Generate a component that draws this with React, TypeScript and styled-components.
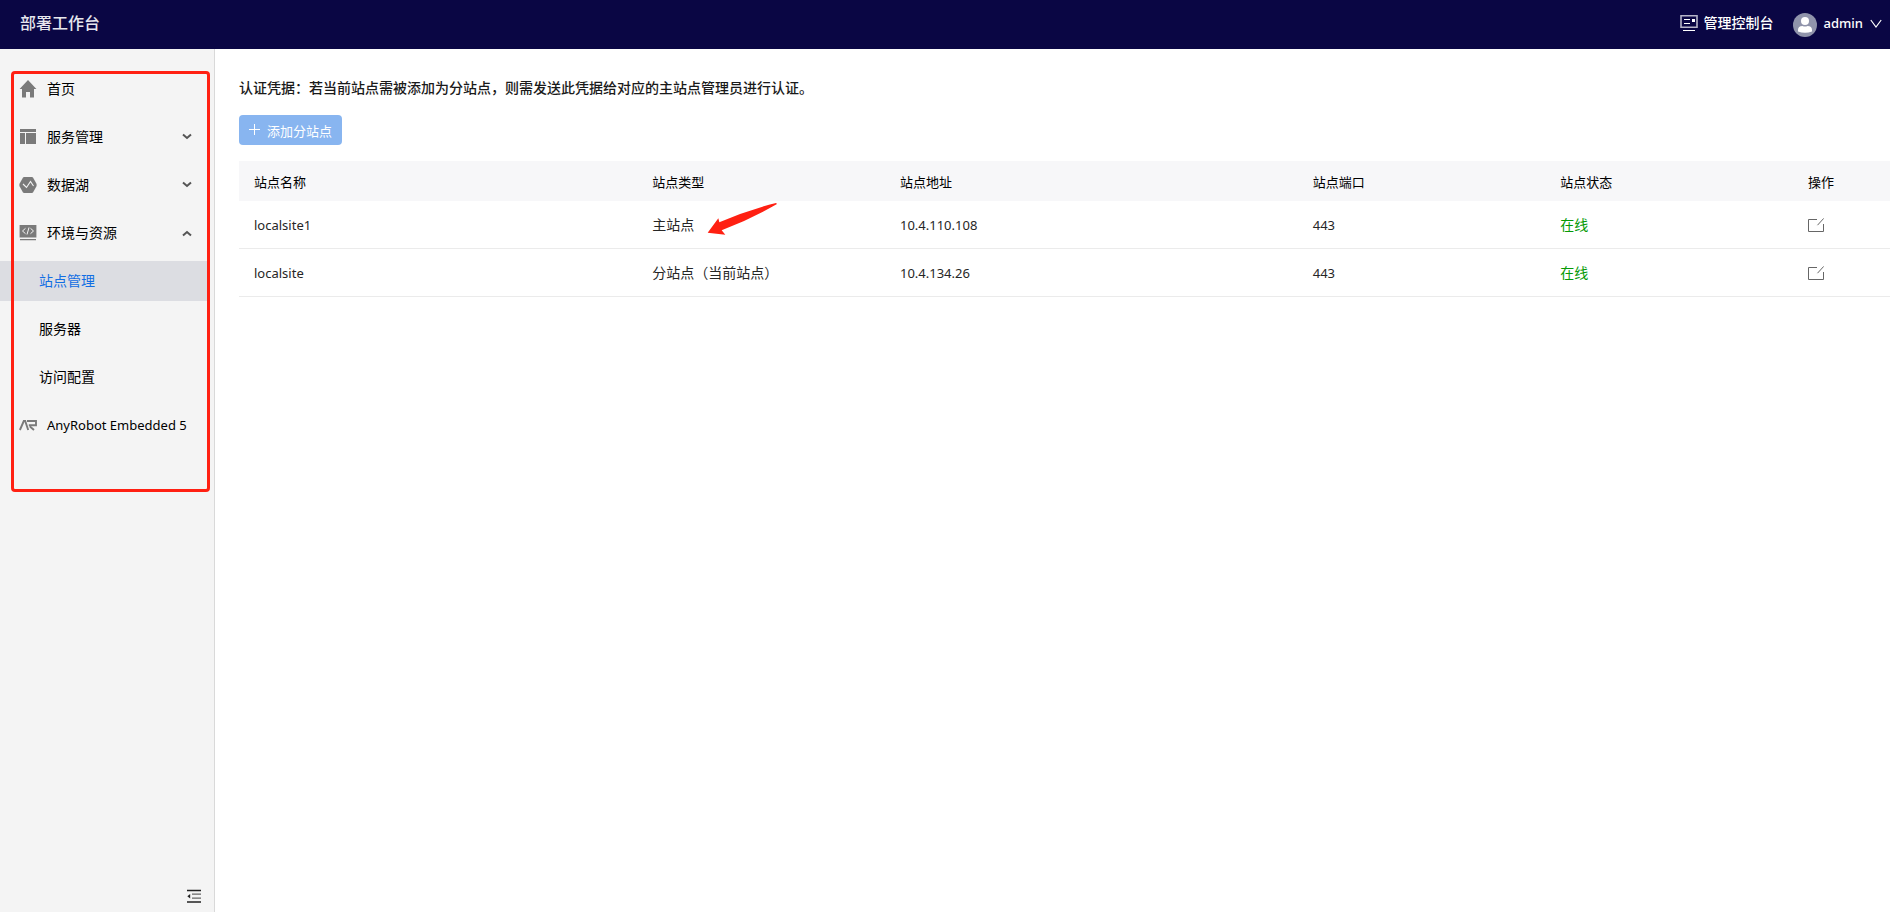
import React, { useState } from "react";
import styled, { createGlobalStyle } from "styled-components";

const GlobalStyle = createGlobalStyle`
  *, *::before, *::after { box-sizing: border-box; }
  body {
    margin: 0;
    background: #fff;
    color: #000;
    font-family: "Noto Sans", "Noto Sans CJK SC", sans-serif;
    font-size: 14px;
    line-height: 20px;
  }
  button { font: inherit; color: inherit; border: 0; padding: 0; background: none; cursor: pointer; }
  a { color: inherit; text-decoration: none; }
  svg { display: block; flex: none; }
`;

const Page = styled.div`
  display: flex;
  flex-direction: column;
  min-height: 100vh;
`;

const TopBar = styled.header`
  display: flex;
  align-items: center;
  justify-content: space-between;
  height: 49px;
  padding: 0 8px 0 20px;
  background: #0a0644;
  color: #fff;
`;

const Title = styled.h1`
  margin: 0;
  padding-bottom: 4px;
  font-size: 16px;
  line-height: 24px;
  font-weight: 500;
  color: #e6e6ee;
`;

const TopActions = styled.div`
  display: flex;
  align-items: center;
  gap: 19px;
`;

const ConsoleLink = styled.a`
  display: flex;
  align-items: center;
  gap: 6px;
  padding-bottom: 4px;
  font-weight: 500;
`;

const UserButton = styled.button`
  display: flex;
  align-items: center;
  gap: 7px;
  font-weight: 500;
`;

const UserName = styled.span`
  padding-bottom: 4px;
  font-size: 13px;
`;

const Body = styled.div`
  display: flex;
  flex: 1;
`;

const Sidebar = styled.aside`
  position: relative;
  display: flex;
  flex-direction: column;
  justify-content: space-between;
  width: 215px;
  flex: none;
  padding: 20px 7px 8px 0;
  background: #f4f4f4;
  border-right: 1px solid #d9d9d9;
`;

const NavList = styled.ul`
  display: flex;
  flex-direction: column;
  gap: 8px;
  margin: 0;
  padding: 0;
  list-style: none;
`;

const NavItem = styled.button<{ $sub?: boolean; $active?: boolean }>`
  display: flex;
  align-items: center;
  gap: 10px;
  width: 100%;
  height: 40px;
  padding: 0 15px 0 ${(p) => (p.$sub ? 39 : 19)}px;
  white-space: nowrap;
  text-align: left;
  background: ${(p) => (p.$active ? "#dcdde2" : "transparent")};
  color: ${(p) => (p.$active ? "#126ee3" : "#000")};
`;

const NavLabel = styled.span<{ $latin?: boolean }>`
  flex: 1;
  font-size: ${(p) => (p.$latin ? 13 : 14)}px;
`;

const CollapseButton = styled.button`
  align-self: flex-end;
  margin-right: 5px;
`;

const Highlight = styled.div`
  position: absolute;
  top: 22px;
  left: 11px;
  width: 199px;
  height: 421px;
  border: 3px solid #ff2012;
  border-radius: 4px;
  pointer-events: none;
`;

const Main = styled.main`
  flex: 1;
  min-width: 0;
  padding: 29px 0 24px 24px;
`;

const Notice = styled.p`
  margin: 0 0 17px;
  font-weight: 500;
  color: #1a1a1a;
`;

const AddButton = styled.button`
  display: flex;
  align-items: center;
  gap: 7px;
  height: 30px;
  margin-bottom: 16px;
  padding: 2px 10px 0;
  border-radius: 4px;
  background: #88b5f0;
  color: #fff;
  font-size: 13px;
`;

const Table = styled.table`
  width: 100%;
  table-layout: fixed;
  border-collapse: separate;
  border-spacing: 0;
`;

const HeadCell = styled.th`
  height: 40px;
  padding: 2px 15px 0;
  background: #f7f7f9;
  font-size: 13px;
  font-weight: 400;
  text-align: left;
`;

const Cell = styled.td<{ $online?: boolean; $latin?: boolean }>`
  position: relative;
  height: 48px;
  padding: 0 15px;
  border-bottom: 1px solid #ebebeb;
  font-size: ${(p) => (p.$latin ? 13 : 14)}px;
  color: ${(p) => (p.$online ? "#069a06" : "#262626")};
`;

const EditButton = styled.button`
  display: block;
`;

const Col = styled.col<{ $width?: string }>`
  width: ${(p) => p.$width ?? "auto"};
`;

const Arrow = styled.svg`
  position: absolute;
  top: 1px;
  left: 70px;
  z-index: 1;
`;

const HomeIcon = () => (
  <svg width="18" height="18" viewBox="0 0 18 18" fill="#7a7a7a">
    <path d="M9 0 .6 9H3v8.5h4v-5.4h4v5.4h4V9h2.4z" />
  </svg>
);

const ServiceIcon = () => (
  <svg width="18" height="18" viewBox="0 0 18 18" fill="#7a7a7a">
    <path d="M1 1h16v3H1zM1 5h5v11H1zM7 5h10v11H7z" />
  </svg>
);

const LakeIcon = () => (
  <svg width="18" height="18" viewBox="0 0 18 18">
    <path d="M5 1h8l1 .6 3.6 6.4v2L14 16.400l-1 .6H5l-1-.6L.4 10V8L4 1.600z" fill="#7a7a7a" />
    <path d="M4 8 7.500 11.500l4-6L14.500 10" fill="none" stroke="#f4f4f4" strokeWidth="1.100" />
  </svg>
);

const EnvIcon = () => (
  <svg width="18" height="18" viewBox="0 0 18 18">
    <path d="M.6 1h16.800v12.500H.6zM1 15h16v1.200H1z" fill="#7a7a7a" />
    <path d="M6.500 4.300 3.500 7l3 2.700M11.500 4.300l3 2.700-3 2.700M10 3.500 8 10.500" fill="none" stroke="#f4f4f4" />
  </svg>
);

const RobotIcon = () => (
  <svg width="18" height="18" viewBox="0 0 18 18" fill="none" stroke="#7a7a7a" strokeWidth="1.900">
    <path d="M.9 14 4.800 5h1.400l3 9M8 5h9v4.300H9.800M11.500 9.300V11l3.500 3" />
  </svg>
);

const Chevron = ({ up = false }: { up?: boolean }) => (
  <svg width="10" height="10" viewBox="0 0 10 10" fill="none" stroke="#555" strokeWidth="2">
    <path d={up ? "M1 7.500 5 4l4 3.500" : "M1 2.500 5 6l4-3.500"} />
  </svg>
);

const ConsoleIcon = () => (
  <svg width="18" height="18" viewBox="0 0 18 18" fill="none">
    <path d="M1 1.700h16v11.600H1z" stroke="#b5b4c8" strokeWidth="1.600" />
    <path d="M4 5.500h6M4 9.500h6M3 16.500h12" stroke="#fff" />
    <path d="M12 5h3v3h-3z" fill="#fff" />
  </svg>
);

const Avatar = () => (
  <svg width="24" height="24" viewBox="0 0 24 24" fill="#fff">
    <circle cx="12" cy="12" r="12" fill="#9094ab" />
    <circle cx="12" cy="8" r="4" />
    <path d="M5 17q0-4 4.500-4 2.500 1.200 5 0Q19 13 19 17v1.500q-7 2.600-14 0z" />
  </svg>
);

const UserChevron = () => (
  <svg width="12" height="14" viewBox="0 0 12 14" fill="none" stroke="#fff" strokeWidth="1.200">
    <path d="M.8 2 6 9l5.200-7" />
  </svg>
);

const CollapseIcon = () => (
  <svg width="16" height="16" viewBox="0 0 16 16" fill="none">
    <path d="M1 2.500h14M1 14h14" stroke="#222" strokeWidth="1.300" />
    <path d="M6 6.200h9M6 10.200h9" stroke="#666" strokeWidth="1.300" />
    <path d="M4.200 6v4.500L1.300 8.200z" fill="#222" />
  </svg>
);

const PlusIcon = () => (
  <svg width="11" height="14" viewBox="0 0 11 14" stroke="#fff">
    <path d="M0 5.500h11M5.500 0v11" />
  </svg>
);

const EditIcon = () => (
  <svg width="16" height="14" viewBox="0 0 16 14" fill="none" stroke="#666">
    <path d="M9 1.500H.5v12h15V6M15.700.400 9.500 7.200" />
  </svg>
);

const environmentPages = ["站点管理", "服务器", "访问配置"];

const columns = [
  { label: "站点名称" },
  { label: "站点类型", width: "15%" },
  { label: "站点地址", width: "25%" },
  { label: "站点端口", width: "15%" },
  { label: "站点状态", width: "15%" },
  { label: "操作", width: "97px" },
];

const sites = [
  { name: "localsite1", type: "主站点", address: "10.4.110.108", port: 443, marked: true },
  { name: "localsite", type: "分站点（当前站点）", address: "10.4.134.26", port: 443, marked: false },
];

export default function App() {
  const [active, setActive] = useState("站点管理");
  const [open, setOpen] = useState(true);

  return (
    <Page>
      <GlobalStyle />
      <TopBar>
        <Title>部署工作台</Title>
        <TopActions>
          <ConsoleLink href="#console">
            <ConsoleIcon />
            管理控制台
          </ConsoleLink>
          <UserButton type="button">
            <Avatar />
            <UserName>admin</UserName>
            <UserChevron />
          </UserButton>
        </TopActions>
      </TopBar>
      <Body>
        <Sidebar>
          <nav>
            <NavList>
              <li><NavItem type="button"><HomeIcon /><NavLabel>首页</NavLabel></NavItem></li>
              <li><NavItem type="button"><ServiceIcon /><NavLabel>服务管理</NavLabel><Chevron /></NavItem></li>
              <li><NavItem type="button"><LakeIcon /><NavLabel>数据湖</NavLabel><Chevron /></NavItem></li>
              <li>
                <NavItem type="button" aria-expanded={open} onClick={() => setOpen(!open)}>
                  <EnvIcon /><NavLabel>环境与资源</NavLabel><Chevron up={open} />
                </NavItem>
              </li>
              {open && environmentPages.map((page) => (
                <li key={page}>
                  <NavItem type="button" $sub $active={page === active} onClick={() => setActive(page)}>
                    <NavLabel>{page}</NavLabel>
                  </NavItem>
                </li>
              ))}
              <li><NavItem type="button"><RobotIcon /><NavLabel $latin>AnyRobot Embedded 5</NavLabel></NavItem></li>
            </NavList>
          </nav>
          <CollapseButton type="button" aria-label="收起菜单"><CollapseIcon /></CollapseButton>
          <Highlight />
        </Sidebar>
        <Main>
          <Notice>认证凭据：若当前站点需被添加为分站点，则需发送此凭据给对应的主站点管理员进行认证。</Notice>
          <AddButton type="button"><PlusIcon />添加分站点</AddButton>
          <Table>
            <colgroup>
              {columns.map((c) => <Col key={c.label} $width={c.width} />)}
            </colgroup>
            <thead>
              <tr>{columns.map((c) => <HeadCell key={c.label} scope="col">{c.label}</HeadCell>)}</tr>
            </thead>
            <tbody>
              {sites.map((site) => (
                <tr key={site.name}>
                  <Cell $latin>{site.name}</Cell>
                  <Cell>
                    {site.type}
                    {site.marked && (
                      <Arrow width="71" height="34" viewBox="0 0 213 102" fill="#ff2012" aria-hidden="true">
                        <path d="M2 92 34 49l3 12Q120 25 207 3l3 3Q130 52 44 85l11 13z" />
                      </Arrow>
                    )}
                  </Cell>
                  <Cell $latin>{site.address}</Cell>
                  <Cell $latin>{site.port}</Cell>
                  <Cell $online>在线</Cell>
                  <Cell><EditButton type="button" aria-label="编辑"><EditIcon /></EditButton></Cell>
                </tr>
              ))}
            </tbody>
          </Table>
        </Main>
      </Body>
    </Page>
  );
}
